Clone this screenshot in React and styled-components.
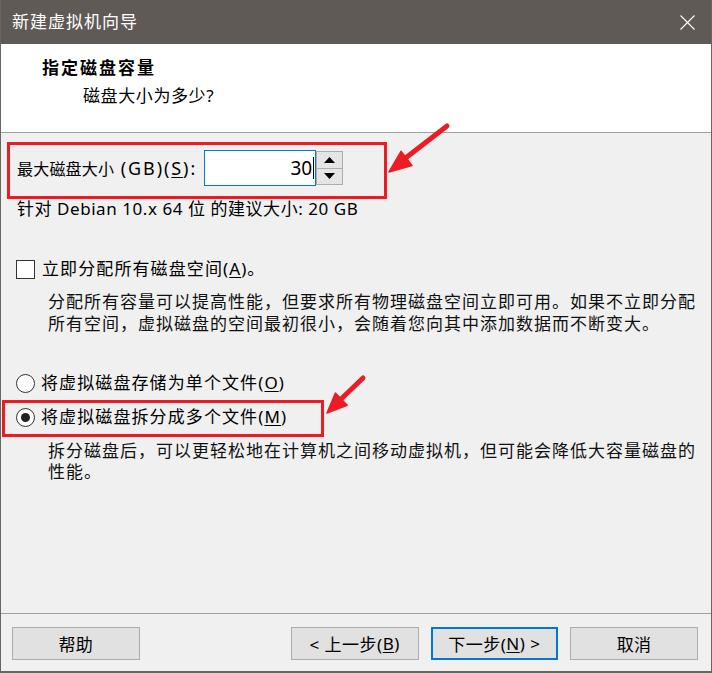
import React from "react";
import styled, { createGlobalStyle } from "styled-components";

const Global = createGlobalStyle`
  html, body { margin: 0; padding: 0; background: #f0f0f0; }
  body { font-family: "Noto Sans", "Noto Sans CJK SC", sans-serif; }
  * { box-sizing: border-box; }
`;

const FONT = `"Noto Sans", "Noto Sans CJK SC", sans-serif`;

const Window = styled.div`
  position: relative;
  width: 712px;
  height: 673px;
  display: flex;
  flex-direction: column;
  border-left: 1px solid #6a6561;
  border-right: 1px solid #6a6561;
  border-bottom: 2px solid #6a6561;
  background: #f0f0f0;
  font-family: ${FONT};
  color: #000;
  overflow: hidden;
`;

const TitleBar = styled.div`
  height: 44px;
  flex: none;
  background: #5f5a56;
  display: flex;
  align-items: center;
  justify-content: space-between;
  padding-left: 11px;
`;

const Title = styled.div`
  color: #fff;
  font-size: 17px;
  letter-spacing: 1px;
  line-height: 20px;
`;

const CloseBtn = styled.div`
  width: 46px;
  height: 44px;
  display: flex;
  align-items: center;
  justify-content: center;
  margin-right: 1px;
`;

const Header = styled.div`
  flex: none;
  height: 89px;
  background: #fff;
  padding: 13px 0 0 41px;
  border-bottom: 1px solid #a0a0a0;
`;

const HeaderTitle = styled.div`
  font-size: 17px;
  font-weight: 700;
  letter-spacing: 2px;
  line-height: 22px;
`;

const HeaderSub = styled.div`
  margin: 6px 0 0 41px;
  font-size: 17px;
  letter-spacing: 0.6px;
  line-height: 22px;
`;

const Body = styled.div`
  flex: 1;
  display: flex;
  flex-direction: column;
  align-items: flex-start;
  padding-top: 9px;
`;

const Highlight = styled.div`
  border: 3px solid #ed1c24;
  margin-left: ${(p) => p.$left}px;
  margin-top: ${(p) => p.$top || 0}px;
  width: ${(p) => p.$width}px;
  padding: ${(p) => p.$pad};
  display: flex;
  align-items: center;
`;

const SizeLabel = styled.span`
  font-size: 16px;
  line-height: 20px;
  letter-spacing: 0.2px;
  margin-right: 7px;
  & .lat { font-size: 18px; letter-spacing: 1.9px; }
`;

const U = styled.span`
  text-decoration: underline;
  text-underline-offset: 2px;
`;

const SpinBox = styled.div`
  display: flex;
  align-items: center;
`;

const NumInput = styled.div`
  width: 112px;
  height: 36px;
  border: 1px solid #0078d7;
  background: #fff;
  display: flex;
  align-items: center;
  justify-content: flex-end;
  padding-right: 1px;
  font-size: 19px;
  line-height: 24px;
`;

const Caret = styled.span`
  display: inline-block;
  width: 1px;
  height: 22px;
  background: #000;
  margin-left: 1px;
`;

const SpinBtns = styled.div`
  display: flex;
  flex-direction: column;
  width: 27px;
  height: 34px;
  border: 1px solid #adadad;
  background: #e5e5e5;
`;

const SpinBtn = styled.div`
  flex: 1;
  display: flex;
  align-items: center;
  justify-content: center;
  border-top: ${(p) => (p.$second ? "1px solid #adadad" : "none")};
`;

const Hint = styled.div`
  margin-left: 16px;
  font-size: 17px;
  line-height: 20px;
  letter-spacing: 0.55px;
`;

const OptionRow = styled.label`
  display: flex;
  align-items: center;
  margin-left: ${(p) => p.$left}px;
  margin-top: ${(p) => p.$top || 0}px;
  font-size: 17px;
  line-height: 20px;
  letter-spacing: 1.1px;
  white-space: nowrap;
`;

const Check = styled.span`
  width: 19px;
  height: 19px;
  border: 1px solid #333;
  background: #fff;
  margin-right: 7px;
  flex: none;
`;

const Radio = styled.span`
  width: 19px;
  height: 19px;
  border: 1px solid #333;
  border-radius: 50%;
  background: #fff;
  margin-right: 6px;
  flex: none;
  display: flex;
  align-items: center;
  justify-content: center;
  &::after {
    content: "";
    width: 9px;
    height: 9px;
    border-radius: 50%;
    background: #222;
    display: ${(p) => (p.$checked ? "block" : "none")};
  }
`;

const Desc = styled.div`
  margin-left: 47px;
  margin-top: ${(p) => p.$top}px;
  font-size: 17px;
  line-height: ${(p) => p.$lh}px;
  letter-spacing: 1px;
  color: #111;
  white-space: nowrap;
`;

const Footer = styled.div`
  flex: none;
  height: 58px;
  border-top: 1px solid #a0a0a0;
  display: flex;
  align-items: flex-start;
  padding: 13px 13px 0 11px;
`;

const Button = styled.div`
  width: 128px;
  height: 33px;
  display: flex;
  align-items: center;
  justify-content: center;
  background: #e1e1e1;
  border: ${(p) => (p.$primary ? "2px solid #0078d7" : "1px solid #adadad")};
  font-size: 17px;
  letter-spacing: 0.5px;
  margin-left: ${(p) => p.$gap || 0}px;
  white-space: nowrap;
`;

const Annotations = styled.svg`
  position: absolute;
  left: -1px;
  top: 0;
  width: 712px;
  height: 673px;
  pointer-events: none;
`;

export default function App() {
  return (
    <>
      <Global />
      <Window>
        <TitleBar>
          <Title>新建虚拟机向导</Title>
          <CloseBtn>
            <svg width="15" height="15" viewBox="0 0 15 15">
              <path d="M0.5 0.5 L14.5 14.5 M14.5 0.5 L0.5 14.5" stroke="#fff" strokeWidth="1.1" />
            </svg>
          </CloseBtn>
        </TitleBar>
        <Header>
          <HeaderTitle>指定磁盘容量</HeaderTitle>
          <HeaderSub>磁盘大小为多少?</HeaderSub>
        </Header>
        <Body>
          <Highlight $left={6} $top={0} $width={380} $pad="5px 0 10px 7px">
            <SizeLabel>
              最大磁盘大小<span className="lat"> (GB)(<U>S</U>):</span>
            </SizeLabel>
            <SpinBox>
              <NumInput>
                30<Caret />
              </NumInput>
              <SpinBtns>
                <SpinBtn>
                  <svg width="11" height="6" viewBox="0 0 11 6"><path d="M5.5 0 L11 6 L0 6 Z" fill="#000" /></svg>
                </SpinBtn>
                <SpinBtn $second>
                  <svg width="11" height="6" viewBox="0 0 11 6"><path d="M0 0 L11 0 L5.5 6 Z" fill="#000" /></svg>
                </SpinBtn>
              </SpinBtns>
            </SpinBox>
          </Highlight>
          <Hint>针对 Debian 10.x 64 位 的建议大小: 20 GB</Hint>

          <OptionRow $left={15} $top={40}>
            <Check />
            立即分配所有磁盘空间(<U>A</U>)。
          </OptionRow>
          <Desc $top={12} $lh={22}>
            <div>分配所有容量可以提高性能，但要求所有物理磁盘空间立即可用。如果不立即分配</div>
            <div>所有空间，虚拟磁盘的空间最初很小，会随着您向其中添加数据而不断变大。</div>
          </Desc>

          <OptionRow $left={15} $top={38}>
            <Radio />
            将虚拟磁盘存储为单个文件(<U>O</U>)
          </OptionRow>
          <Highlight $left={1} $top={7} $width={322} $pad="4px 0 7px 11px">
            <OptionRow $left={0}>
              <Radio $checked />
              将虚拟磁盘拆分成多个文件(<U>M</U>)
            </OptionRow>
          </Highlight>
          <Desc $top={3} $lh={21}>
            <div>拆分磁盘后，可以更轻松地在计算机之间移动虚拟机，但可能会降低大容量磁盘的</div>
            <div>性能。</div>
          </Desc>
        </Body>
        <Footer>
          <Button>帮助</Button>
          <Button $gap={151}>&lt; 上一步(<U>B</U>)</Button>
          <Button $primary $gap={12}>下一步(<U>N</U>) &gt;</Button>
          <Button $gap={12}>取消</Button>
        </Footer>
        <Annotations viewBox="0 0 712 673">
          <g fill="#ed1c24" stroke="#ed1c24" strokeLinecap="round" strokeLinejoin="round">
            <line x1="447" y1="126" x2="403" y2="160" strokeWidth="5" />
            <polygon points="389,172 412,165.5 401,151.3" strokeWidth="1.5" />
            <line x1="363" y1="378" x2="338" y2="402" strokeWidth="5" />
            <polygon points="327,413 347.2,405.2 335.4,393" strokeWidth="1.5" />
          </g>
        </Annotations>
      </Window>
    </>
  );
}
